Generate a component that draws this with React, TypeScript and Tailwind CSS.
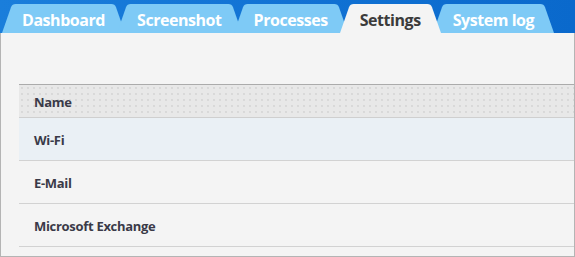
import React from "react";

const tabs = ["Dashboard", "Screenshot", "Processes", "Settings", "System log"];
const active = "Settings";

function Tab({ label, isActive, first }: { label: string; isActive: boolean; first: boolean }) {
  const fill = isActive ? "#f4f4f4" : "#7ecaf6";
  return (
    <div className={`flex h-[29px] items-stretch ${first ? "" : "-ml-[8px]"} ${isActive ? "relative z-10" : "relative"}`}>
      <svg width="15" height="29" viewBox="0 0 15 29" className="block shrink-0 -mr-px">
        <path d="M0 29 L9 3.2 Q10.2 0 13.6 0 L15 0 L15 29 Z" fill={fill} />
      </svg>
      <div
        className={`flex items-center px-[6px] pt-[3px] text-[16px] font-bold tracking-[-0.45px] ${isActive ? "bg-[#f4f4f4] text-[#3b3b3b]" : "bg-[#7ecaf6] text-white"}`}
      >
        {label}
      </div>
      <svg width="15" height="29" viewBox="0 0 15 29" className="block shrink-0 -ml-px">
        <path d="M15 29 L6 3.2 Q4.8 0 1.4 0 L0 0 L0 29 Z" fill={fill} />
      </svg>
    </div>
  );
}

const rows = ["Wi-Fi", "E-Mail", "Microsoft Exchange"];

export default function App() {
  return (
    <div className="w-[575px] h-[257px] flex flex-col bg-[#f4f4f4]" style={{ fontFamily: '"Open Sans", "Noto Sans", sans-serif' }}>
      <div className="h-[33px] flex items-end pl-[2px] bg-gradient-to-r from-[#1a7edb] via-[#1172d4] to-[#0a69cc]">
        {tabs.map((t, i) => (
          <Tab key={t} label={t} isActive={t === active} first={i === 0} />
        ))}
      </div>
      <div className="flex-1 border-x border-b border-[#b4b4b4] pt-[51px] pl-[18px]">
        <div className="border-t border-[#ababab]">
          <div className="h-[33px] flex items-center pl-[15px] pt-[3px] border-b border-[#cfcfcf] bg-[#e8e8e8] bg-[radial-gradient(circle,#d0d0d0_0.6px,transparent_0.9px)] bg-[size:6px_6px] text-[13px] font-bold tracking-[-0.3px] text-[#3a3a48]">
            Name
          </div>
          {rows.map((r, i) => (
            <div
              key={r}
              className={`h-[43px] flex items-center pl-[15px] pt-[3px] border-b border-[#d2d2d2] text-[13px] font-bold tracking-[-0.3px] text-[#3a3a48] ${i === 0 ? "bg-[#eaf0f5]" : ""}`}
            >
              {r}
            </div>
          ))}
        </div>
      </div>
    </div>
  );
}
